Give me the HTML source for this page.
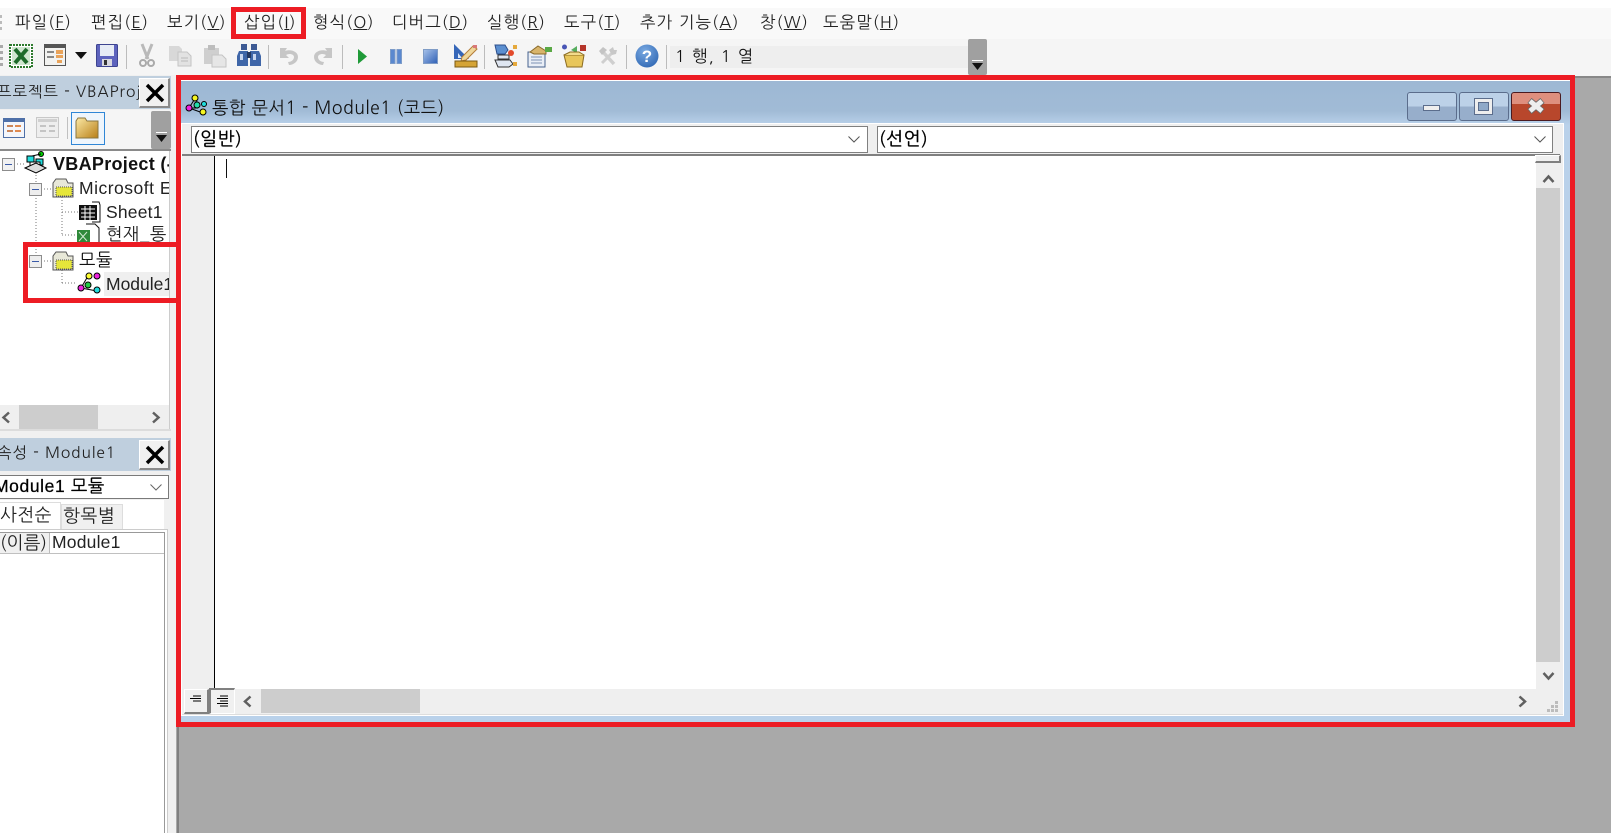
<!DOCTYPE html>
<html lang="ko"><head><meta charset="utf-8"><title>VBA</title>
<style>
html,body{margin:0;padding:0;width:1611px;height:833px;overflow:hidden;background:#fff}
body{position:relative;font-family:"Liberation Sans","NanumGothic","Noto Sans CJK KR",sans-serif;color:#111}
.a{position:absolute;box-sizing:border-box}
.t{position:absolute;white-space:nowrap;line-height:1;font-size:15.5px}
.k{font-family:"NanumGothic","Noto Sans CJK KR",sans-serif}
.m{position:absolute;top:14px;white-space:nowrap;font-size:16.5px;letter-spacing:1.1px;line-height:18px;font-family:"NanumGothic","Liberation Sans",sans-serif;color:#222}
.m u{text-underline-offset:1px}
.sep{position:absolute;top:45px;width:1px;height:24px;background:#bcbcbc}
svg{position:absolute;overflow:visible}
.x{background:#f0f0f0;border:1px solid #fff;border-right:2px solid #8a8a8a;border-bottom:2px solid #8a8a8a}
.red{position:absolute;box-sizing:border-box;border:5px solid #ed1c24}
</style></head><body>

<!-- menu bar -->
<div class="a" style="left:0;top:8px;width:1611px;height:31px;background:#f9f9f9"></div>
<div class="a" style="left:0;top:39px;width:1611px;height:38px;background:#f5f5f5"></div>
<div class="a" style="left:0;top:15px;width:2px;height:18px;background:repeating-linear-gradient(#bbb 0 3px,transparent 3px 6px)"></div>
<span class="m" style="left:15px">파일(<u>F</u>)</span>
<span class="m" style="left:91px">편집(<u>E</u>)</span>
<span class="m" style="left:167px">보기(<u>V</u>)</span>
<span class="m" style="left:244px">삽입(<u>I</u>)</span>
<span class="m" style="left:313px">형식(<u>O</u>)</span>
<span class="m" style="left:392px">디버그(<u>D</u>)</span>
<span class="m" style="left:487px">실행(<u>R</u>)</span>
<span class="m" style="left:564px">도구(<u>T</u>)</span>
<span class="m" style="left:640px">추가 기능(<u>A</u>)</span>
<span class="m" style="left:760px">창(<u>W</u>)</span>
<span class="m" style="left:823px">도움말(<u>H</u>)</span>

<!-- toolbar icons -->
<div class="a" style="left:0;top:45px;width:3px;height:24px;background:repeating-linear-gradient(#aaa 0 3px,transparent 3px 6px)"></div>
<svg style="left:9px;top:44px" width="24" height="24" viewBox="0 0 24 24"><rect x="1" y="1" width="22" height="22" fill="#fff" stroke="#2d7a2d" stroke-width="2" stroke-dasharray="2 1"/><rect x="3" y="3" width="18" height="18" fill="#cfe6cf"/><path d="M6 5l12 14M18 5L6 19" stroke="#1d6b2a" stroke-width="4"/></svg>
<svg style="left:44px;top:44px" width="22" height="22" viewBox="0 0 22 22"><rect x=".5" y=".5" width="21" height="21" fill="#f2f2f0" stroke="#555"/><rect x="1" y="1" width="20" height="3" fill="#555"/><rect x="3" y="7" width="7" height="2" fill="#888"/><rect x="3" y="12" width="7" height="2" fill="#888"/><rect x="12" y="6" width="7" height="4" fill="#e9a35a"/><rect x="12" y="11" width="7" height="3" fill="#e9a35a"/><rect x="13" y="16" width="5" height="3" fill="#e9a35a"/></svg>
<svg style="left:75px;top:52px" width="12" height="7"><path d="M0 0h12L6 7z" fill="#111"/></svg>
<svg style="left:96px;top:44px" width="22" height="23" viewBox="0 0 22 23"><rect x=".5" y=".5" width="21" height="22" rx="1" fill="#5d63bd" stroke="#3d4490"/><rect x="4" y="1" width="14" height="11" fill="#e6ebf5"/><rect x="6" y="15" width="10" height="7" fill="#d8d8e0"/><rect x="8" y="16" width="3" height="5" fill="#333"/></svg>
<div class="sep" style="left:126px"></div>
<svg style="left:139px;top:44px" width="16" height="24" viewBox="0 0 16 24"><path d="M3 0l6 15M13 0L7 15" stroke="#b9b9b9" stroke-width="3"/><circle cx="4" cy="19" r="3" fill="none" stroke="#aaa" stroke-width="2"/><circle cx="12" cy="19" r="3" fill="none" stroke="#aaa" stroke-width="2"/></svg>
<svg style="left:169px;top:46px" width="23" height="20" viewBox="0 0 23 20"><path d="M0 0h10l3 3v12H0z" fill="#d8d8d8"/><path d="M9 6h9l4 4v10H9z" fill="#e2e2e2" stroke="#c4c4c4"/><path d="M12 12h7M12 15h7" stroke="#bbb"/></svg>
<svg style="left:203px;top:45px" width="24" height="22" viewBox="0 0 24 22"><path d="M1 3h15v16H1z" fill="#cfcfcf"/><rect x="5" y="0" width="7" height="5" fill="#bdbdbd"/><path d="M9 10h10l4 4v8H9z" fill="#e6e6e6" stroke="#c4c4c4"/></svg>
<svg style="left:237px;top:44px" width="24" height="23" viewBox="0 0 24 23"><rect x="4" y="0" width="6" height="6" fill="#3d5a94"/><rect x="14" y="0" width="6" height="6" fill="#3d5a94"/><path d="M2 7h9v15H0V12zM13 7h9l2 5v10H13z" fill="#3f66a8"/><rect x="10" y="8" width="4" height="6" fill="#24375f"/><rect x="3" y="10" width="3" height="6" fill="#c9d6ee"/><rect x="16" y="10" width="3" height="6" fill="#c9d6ee"/></svg>
<div class="sep" style="left:268px"></div>
<svg style="left:279px;top:47px" width="21" height="19" viewBox="0 0 21 19"><path d="M1 1l7 0-2 3c5-2 13 0 13 6 0 5-5 8-9 8l-1-3c3 0 6-2 6-5 0-3-5-4-8-2l3 3H1z" fill="#c6c6c6"/></svg>
<svg style="left:312px;top:47px;transform:scaleX(-1)" width="21" height="19" viewBox="0 0 21 19"><path d="M1 1l7 0-2 3c5-2 13 0 13 6 0 5-5 8-9 8l-1-3c3 0 6-2 6-5 0-3-5-4-8-2l3 3H1z" fill="#c6c6c6"/></svg>
<div class="sep" style="left:342px"></div>
<svg style="left:358px;top:49px" width="9" height="15"><path d="M0 0l9 7.500L0 15z" fill="#1f9a38"/></svg>
<svg style="left:390px;top:49px" width="12" height="15"><rect x=".5" y=".5" width="4.500" height="14" fill="#5a88cf" stroke="#7d9cc9"/><rect x="7" y=".5" width="4.500" height="14" fill="#5a88cf" stroke="#7d9cc9"/></svg>
<svg style="left:423px;top:49px" width="15" height="15"><defs><linearGradient id="s" x1="0" y1="0" x2="1" y2="1"><stop offset="0" stop-color="#a9c3ea"/><stop offset="1" stop-color="#2e5fb5"/></linearGradient></defs><rect x=".5" y=".5" width="14" height="14" fill="url(#s)" stroke="#7f9cc6"/></svg>
<svg style="left:453px;top:44px" width="25" height="24" viewBox="0 0 25 24"><path d="M1 0l15 15H1z" fill="#3566b8"/><path d="M5 9l4 5H5z" fill="#d9e6f7"/><path d="M9 13L20 2l4 3-11 11-5 1z" fill="#f0d79a" stroke="#b47d3a"/><rect x="20" y="1" width="4" height="3" fill="#d9787a"/><rect x="2" y="17" width="22" height="6" fill="#d5a436" stroke="#7a5a14"/></svg>
<div class="sep" style="left:484px"></div>
<svg style="left:494px;top:44px" width="25" height="24" viewBox="0 0 25 24"><path d="M1 1h10l3 5-3 4H3z" fill="#5b8fd0" stroke="#2d4f8c"/><path d="M4 11h11v4H4zM1 16h15l3 4-4 3H4z" fill="#dfe6f1" stroke="#333"/><circle cx="17" cy="9" r="3" fill="#e34a2b"/><rect x="19" y="1" width="4" height="4" fill="#e5a93c"/><rect x="19" y="18" width="4" height="4" fill="#e5a93c"/></svg>
<svg style="left:527px;top:45px" width="25" height="22" viewBox="0 0 25 22"><rect x="1" y="7" width="17" height="15" fill="#e9eef6" stroke="#48628e"/><path d="M4 12h11M4 15h11M4 18h11" stroke="#7d92b4"/><path d="M3 7l8-6 8 5 0 3H7z" fill="#d8b46a" stroke="#8a6a2a"/><path d="M18 2h7v5h-7z" fill="#5aa845"/></svg>
<svg style="left:561px;top:44px" width="26" height="24" viewBox="0 0 26 24"><circle cx="3.500" cy="3" r="2.500" fill="#4855b5"/><path d="M10 6l6-4v7z" fill="#56ad5f"/><rect x="19" y="1" width="6" height="6" fill="#b5352a"/><path d="M3 11h20l-2 12H6z" fill="#e8c65a" stroke="#8a6a20"/><path d="M3 11l6-3h9l5 3" fill="#f2dc8c" stroke="#8a6a20"/></svg>
<svg style="left:598px;top:46px" width="20" height="20" viewBox="0 0 20 20"><path d="M5 6l11 12" stroke="#cfcfcf" stroke-width="3.500"/><path d="M1 5l4-4 4 3-5 5z" fill="#c4c4c4"/><path d="M15 6L4 17" stroke="#cfcfcf" stroke-width="3"/><path d="M11 4l4-3 1 3 3 0-1 4-4 1z" fill="#c8c8c8"/></svg>
<div class="sep" style="left:626px"></div>
<svg style="left:635px;top:44px" width="24" height="24" viewBox="0 0 24 24"><defs><radialGradient id="h" cx=".4" cy=".3" r=".8"><stop offset="0" stop-color="#79a9e2"/><stop offset="1" stop-color="#2e66b2"/></radialGradient></defs><circle cx="12" cy="12" r="11.500" fill="url(#h)"/><text x="12" y="18" text-anchor="middle" font-family="Liberation Sans" font-size="17" font-weight="700" fill="#fff">?</text></svg>
<div class="sep" style="left:666px"></div>
<div class="a" style="left:670px;top:46px;width:298px;height:22px;background:#eeeeee"></div>
<span class="t k" style="left:675px;top:49px;font-size:16.5px;letter-spacing:1.2px">1 행, 1 열</span>
<div class="a" style="left:968px;top:39px;width:19px;height:36px;background:#a0a0a0;border-radius:2px"></div>
<div class="a" style="left:972px;top:60px;width:11px;height:1px;background:#fff"></div>
<svg style="left:972px;top:63px" width="11" height="7"><path d="M0 0h11L5.500 7z" fill="#111"/></svg>

<!-- mdi background -->
<div class="a" style="left:176px;top:77px;width:1435px;height:756px;background:#a9a9a9"></div>
<div class="a" style="left:177px;top:76px;width:1434px;height:2px;background:#888"></div>
<div class="a" style="left:177px;top:76px;width:2px;height:757px;background:#808080"></div>

<!-- left panel -->
<div class="a" style="left:0;top:75px;width:176px;height:758px;background:#f0f0f0"></div>
<div class="a" style="left:0;top:500px;width:164px;height:333px;background:#fff"></div>

<!-- project title -->
<div class="a" style="left:0;top:76px;width:171px;height:33px;background:#bfcfde"></div>
<span class="t k" style="left:-3px;top:85px;font-size:15.5px;letter-spacing:.9px;color:#222;width:142px;overflow:hidden">프로젝트 - VBAProje</span>
<div class="a x" style="left:139px;top:78px;width:31px;height:30px"></div>
<svg style="left:146px;top:84px" width="18" height="18"><path d="M1 1l16 16M17 1L1 17" stroke="#000" stroke-width="3.500"/></svg>
<!-- project toolbar -->
<div class="a" style="left:0;top:110px;width:171px;height:39px;background:#f5f5f5"></div>
<svg style="left:3px;top:118px" width="22" height="20"><rect x=".5" y=".5" width="21" height="19" fill="#f4f6fb" stroke="#4f70a8"/><rect x="1" y="1" width="20" height="3" fill="#4f70a8"/><rect x="4" y="7" width="6" height="2" fill="#c9865b"/><rect x="4" y="12" width="6" height="2" fill="#c9865b"/><rect x="12" y="7" width="6" height="2" fill="#e08a50"/><rect x="12" y="12" width="6" height="2" fill="#e08a50"/></svg>
<svg style="left:36px;top:117px" width="23" height="21"><rect x=".5" y=".5" width="22" height="20" fill="#eee" stroke="#c8c8c8"/><rect x="2" y="2" width="19" height="3" fill="#d0d0d0"/><rect x="4" y="8" width="6" height="2" fill="#c4c4c4"/><rect x="4" y="13" width="6" height="2" fill="#c4c4c4"/><rect x="13" y="8" width="6" height="2" fill="#c4c4c4"/><rect x="13" y="13" width="6" height="2" fill="#c4c4c4"/></svg>
<div class="a" style="left:67px;top:117px;width:1px;height:22px;background:#c0c0c0"></div>
<div class="a" style="left:71px;top:112px;width:34px;height:33px;background:#eef5fc;border:1px solid #2f86d6"></div>
<svg style="left:76px;top:118px" width="23" height="20"><defs><linearGradient id="f" x1="0" y1="0" x2="1" y2="1"><stop offset="0" stop-color="#fbe9a6"/><stop offset="1" stop-color="#b87f17"/></linearGradient></defs><path d="M0 3l2-3h7l2 3h11v17H0z" fill="url(#f)" stroke="#8a7640"/></svg>
<div class="a" style="left:151px;top:111px;width:20px;height:38px;background:#a0a0a0;border-radius:2px"></div>
<div class="a" style="left:156px;top:132px;width:11px;height:1px;background:#fff"></div>
<svg style="left:156px;top:135px" width="11" height="7"><path d="M0 0h11L5.500 7z" fill="#111"/></svg>
<div class="a" style="left:0;top:149px;width:171px;height:2px;background:#8a8a8a"></div>

<!-- tree -->
<div class="a" style="left:0;top:151px;width:169px;height:254px;background:#fff"></div>
<div class="a" style="left:169px;top:151px;width:1px;height:279px;background:#ccc"></div>
<svg style="left:0;top:151px" width="170" height="160">
<g stroke="#777" stroke-dasharray="1 2" fill="none"><path d="M14 13h12M36 24v8M36 44v60M41 38h11M62 46v38M62 61h16M62 84h14M41 110h11M62 119v14M62 132h15"/></g>
<g fill="#f1f1f1" stroke="#8c8c8c"><rect x="2.500" y="7.500" width="12" height="12"/><rect x="29.500" y="32.500" width="12" height="12" fill="#eee"/><rect x="29.500" y="104.500" width="12" height="12" fill="#eee"/></g>
<path d="M5 13.500h7M32 38.500h7M32 110.500h7" stroke="#3a5aa8"/>
<!-- VBAProject icon -->
<g stroke="#000"><path d="M27 5h7v6h-7zM36 8h7v6h-7z" fill="#22dddd"/><path d="M30 11h10v5H30z" fill="#fff"/><path d="M25 17l11-5 10 5-10 5z" fill="#ddd"/><circle cx="41" cy="3" r="2.500" fill="#0c0"/><path d="M32 5l9-2"/></g>
<!-- folders -->
<g stroke="#555"><path d="M53 32l3-4h10l2 4h5v14H53z" fill="#e8e8d8"/><rect x="56" y="36" width="16" height="9" fill="#e6e63a" stroke-dasharray="1 1"/><path d="M53 105l3-4h10l2 4h5v14H53z" fill="#e8e8d8"/><rect x="56" y="109" width="16" height="9" fill="#e6e63a" stroke-dasharray="1 1"/></g>
<!-- sheet -->
<rect x="79" y="54" width="18" height="15" fill="#111"/><path d="M81 58h14M81 62h14M81 66h14M85 55v14M90 55v14" stroke="#fff"/><path d="M92 51h7l1 3v17H92" fill="none" stroke="#111"/>
<!-- workbook -->
<path d="M86 73h9l4 4v16H86" fill="#fff" stroke="#111"/><rect x="77" y="79" width="13" height="13" fill="#2f8a3a"/><path d="M79 81l8 9M87 81l-8 9" stroke="#cfe8cf"/>
<!-- module -->
<g><path d="M88 125l-7 12 16 3" fill="none" stroke="#000"/><circle cx="89" cy="125" r="3" fill="#ffff33" stroke="#000"/><circle cx="97" cy="125" r="3" fill="#ee22dd" stroke="#000"/><circle cx="81" cy="137" r="3" fill="#ee22dd" stroke="#000"/><circle cx="88" cy="134" r="3" fill="#22cc44" stroke="#000"/><circle cx="97" cy="139" r="3" fill="#22dddd" stroke="#000"/></g>
</svg>
<span class="t" style="left:53px;top:155px;font-size:18px;font-weight:700;letter-spacing:.3px;width:116px;overflow:hidden">VBAProject (-</span>
<span class="t" style="left:79px;top:180px;font-size:17.5px;letter-spacing:.5px;width:90px;overflow:hidden;color:#222">Microsoft E</span>
<span class="t" style="left:106px;top:204px;font-size:17.5px;letter-spacing:.2px;color:#222">Sheet1</span>
<span class="t k" style="left:106px;top:226px;font-size:17.5px;letter-spacing:.5px;width:63px;overflow:hidden;color:#222">현재_통</span>
<span class="t k" style="left:79px;top:252px;font-size:17.5px;letter-spacing:.5px;color:#111">모듈</span>
<div class="a" style="left:104px;top:272px;width:65px;height:24px;background:#efefef"></div>
<span class="t" style="left:106px;top:276px;font-size:17.5px;width:63px;overflow:hidden;color:#222">Module1</span>
<!-- tree hscroll -->
<div class="a" style="left:0;top:405px;width:169px;height:24px;background:#efefef"></div>
<div class="a" style="left:19px;top:405px;width:79px;height:24px;background:#cdcdcd"></div>
<svg style="left:1px;top:411px" width="10" height="13"><path d="M8 1.500L2.500 6.500 8 11.500" fill="none" stroke="#606060" stroke-width="2.500"/></svg>
<svg style="left:151px;top:411px" width="10" height="13"><path d="M2 1.500L7.500 6.500 2 11.500" fill="none" stroke="#606060" stroke-width="2.500"/></svg>
<div class="a" style="left:0;top:429px;width:171px;height:2px;background:#dcdcdc"></div>

<!-- props -->
<div class="a" style="left:0;top:438px;width:171px;height:33px;background:#bfcfde"></div>
<span class="t k" style="left:-3px;top:446px;font-size:15.5px;letter-spacing:.9px;color:#222">속성 - Module1</span>
<div class="a x" style="left:139px;top:440px;width:31px;height:30px"></div>
<svg style="left:146px;top:446px" width="18" height="18"><path d="M1 1l16 16M17 1L1 17" stroke="#000" stroke-width="3.500"/></svg>
<div class="a" style="left:-2px;top:475px;width:171px;height:24px;background:#fff;border:1px solid #7a7a7a"></div>
<span class="t k" style="left:-6px;top:478px;font-size:17.5px;letter-spacing:.6px;color:#000;-webkit-text-stroke:.25px #000"><span style="font-family:'Liberation Sans'">Module1</span> 모듈</span>
<svg style="left:150px;top:484px" width="12" height="7"><path d="M.5.500L6 6 11.500.500" fill="none" stroke="#666"/></svg>
<div class="a" style="left:0;top:502px;width:61px;height:27px;background:#fff;border-right:1px solid #ddd;border-top:1px solid #ddd"></div>
<span class="t k" style="left:0;top:506px;font-size:18px;letter-spacing:.3px;color:#222">사전순</span>
<div class="a" style="left:61px;top:504px;width:62px;height:25px;background:#f0f0f0;border:1px solid #ddd;border-bottom:0"></div>
<span class="t k" style="left:63px;top:507px;font-size:18px;letter-spacing:.5px;color:#222">항목별</span>
<div class="a" style="left:0;top:529px;width:168px;height:304px;background:#fff;border-right:1px solid #ccc;border-top:1px solid #ccc"></div>
<div class="a" style="left:0;top:532px;width:165px;height:301px;border-right:1px solid #999;border-top:1px solid #999"></div>
<div class="a" style="left:0;top:533px;width:49px;height:20px;background:#f0f0f0"></div>
<div class="a" style="left:49px;top:533px;width:1px;height:20px;background:#bbb"></div>
<div class="a" style="left:0;top:553px;width:164px;height:1px;background:#c0c0c0"></div>
<span class="t k" style="left:0;top:534px;font-size:18px;color:#222">(이름)</span>
<span class="t" style="left:52px;top:534px;font-size:17.5px;letter-spacing:.2px;color:#222">Module1</span>

<!-- code window -->
<div class="a" style="left:181px;top:80px;width:1389px;height:642px;background:linear-gradient(#9db8d4 0,#a1bbd6 30px,#b9d1ea 44px,#b9d1ea 100%);border-top:1px solid #fff"></div>
<svg style="left:184px;top:94px" width="24" height="22" viewBox="0 0 24 22"><path d="M12 3L5 14l14 5M12 3l2 11M5 14l9 0" stroke="#000" fill="none"/><circle cx="11" cy="4" r="3" fill="#f5f522" stroke="#000"/><circle cx="5" cy="14" r="3" fill="#ee22dd" stroke="#000"/><circle cx="13" cy="11" r="3" fill="#22ddaa" stroke="#000"/><circle cx="20" cy="10" r="2.500" fill="#22dddd" stroke="#000"/><circle cx="19" cy="18" r="3" fill="#f5f522" stroke="#000"/></svg>
<span class="t k" style="left:212px;top:100px;font-size:17.5px;letter-spacing:.55px;color:#111">통합 문서1 - Module1 (코드)</span>

<!-- caption buttons -->
<div class="a" style="left:1407px;top:92px;width:50px;height:29px;border:1px solid #5b6d8c;border-radius:3px;background:linear-gradient(#bcd1e8 50%,#97aecb 50%)"></div>
<div class="a" style="left:1423px;top:105px;width:17px;height:6px;background:#eee;border:1px solid #5b6d8c"></div>
<div class="a" style="left:1459px;top:92px;width:50px;height:29px;border:1px solid #5b6d8c;border-radius:3px;background:linear-gradient(#bcd1e8 50%,#97aecb 50%)"></div>
<div class="a" style="left:1475px;top:99px;width:17px;height:15px;background:#8fa9c8;border:3px solid #eee;outline:1px solid #5b6d8c;box-shadow:inset 0 0 0 1px #5b6d8c"></div>
<div class="a" style="left:1511px;top:92px;width:50px;height:29px;border:1px solid #4a1a20;border-radius:3px;background:linear-gradient(#de8f7e 40%,#b8472c 40%)"></div>
<svg style="left:1527px;top:98px" width="18" height="16"><path d="M2.500 2.500l13 11M15.500 2.500l-13 11" stroke="#666" stroke-width="6.500"/><path d="M3 3l12 10M15 3L3 13" stroke="#eee" stroke-width="5"/></svg>

<!-- client -->
<div class="a" style="left:182px;top:124px;width:1381px;height:591px;background:#efefef;outline:1px solid #fff"></div>
<div class="a" style="left:191px;top:126px;width:677px;height:27px;background:#fff;border:1px solid #808080"></div>
<span class="t k" style="left:193px;top:130px;font-size:18px;letter-spacing:.6px;color:#000;-webkit-text-stroke:.35px #000">(일반)</span>
<svg style="left:848px;top:136px" width="12" height="7"><path d="M.5.500L6 6 11.500.500" fill="none" stroke="#555"/></svg>
<div class="a" style="left:877px;top:126px;width:676px;height:27px;background:#fff;border:1px solid #808080"></div>
<span class="t k" style="left:879px;top:130px;font-size:18px;letter-spacing:.6px;color:#000;-webkit-text-stroke:.35px #000">(선언)</span>
<svg style="left:1534px;top:136px" width="12" height="7"><path d="M.5.500L6 6 11.500.500" fill="none" stroke="#555"/></svg>
<div class="a" style="left:182px;top:154px;width:1378px;height:2px;background:#808080"></div>
<div class="a" style="left:182px;top:156px;width:32px;height:533px;background:#efefef"></div>
<div class="a" style="left:214px;top:156px;width:1322px;height:533px;background:#fff"></div>
<div class="a" style="left:214px;top:156px;width:1px;height:533px;background:#000"></div>
<div class="a" style="left:226px;top:159px;width:1px;height:19px;background:#111"></div>
<!-- vscroll -->
<div class="a" style="left:1536px;top:156px;width:24px;height:533px;background:#efefef"></div>
<div class="a" style="left:1536px;top:188px;width:24px;height:474px;background:#cdcdcd"></div>
<div class="a" style="left:1535px;top:155px;width:26px;height:8px;background:#f0f0f0;border:1px solid #fff;border-right:2px solid #808080;border-bottom:2px solid #808080"></div>
<svg style="left:1542px;top:174px" width="13" height="10"><path d="M1.500 8L6.500 2.500 11.500 8" fill="none" stroke="#606060" stroke-width="2.500"/></svg>
<svg style="left:1542px;top:671px" width="13" height="10"><path d="M1.500 2L6.500 7.500 11.500 2" fill="none" stroke="#606060" stroke-width="2.500"/></svg>
<!-- hscroll -->
<div class="a" style="left:183px;top:689px;width:1377px;height:25px;background:#efefef"></div>
<div class="a" style="left:261px;top:689px;width:159px;height:24px;background:#cdcdcd"></div>
<div class="a" style="left:184px;top:689px;width:25px;height:25px;background:#f0f0f0;border:1px solid #fff;border-right:2px solid #808080;border-bottom:2px solid #808080"></div>
<div class="a" style="left:209px;top:688px;width:26px;height:26px;background:#f0f0f0;border:2px solid #808080;border-right:1px solid #fff;border-bottom:1px solid #fff"></div>
<svg style="left:190px;top:695px" width="12" height="8"><path d="M3 1h8M0 3.500h11M3 6h8" stroke="#000"/></svg>
<svg style="left:216px;top:695px" width="12" height="12"><path d="M3 1h8M0 3.500h11M3 6h8M0 8.500h11M3 11h8" stroke="#000" transform="translate(1 0)"/></svg>
<svg style="left:242px;top:695px" width="11" height="13"><path d="M8.500 1.500L3 6.500 8.500 11.500" fill="none" stroke="#606060" stroke-width="2.500"/></svg>
<svg style="left:1517px;top:695px" width="11" height="13"><path d="M2.500 1.500L8 6.500 2.500 11.500" fill="none" stroke="#606060" stroke-width="2.500"/></svg>
<svg style="left:1547px;top:700px" width="12" height="12" fill="#bcbcbc"><rect x="8" y="1" width="3" height="3"/><rect x="4" y="5" width="3" height="3"/><rect x="8" y="5" width="3" height="3"/><rect x="0" y="9" width="3" height="3"/><rect x="4" y="9" width="3" height="3"/><rect x="8" y="9" width="3" height="3"/></svg>
<div class="a" style="left:182px;top:714px;width:1381px;height:1px;background:#ddd"></div>

<!-- red annotation boxes -->
<div class="red" style="left:231px;top:7px;width:75px;height:32px"></div>
<div class="red" style="left:23px;top:242px;width:153px;height:61px;border-right-width:0"></div>
<div class="red" style="left:176px;top:75px;width:1399px;height:652px"></div>
</body></html>
